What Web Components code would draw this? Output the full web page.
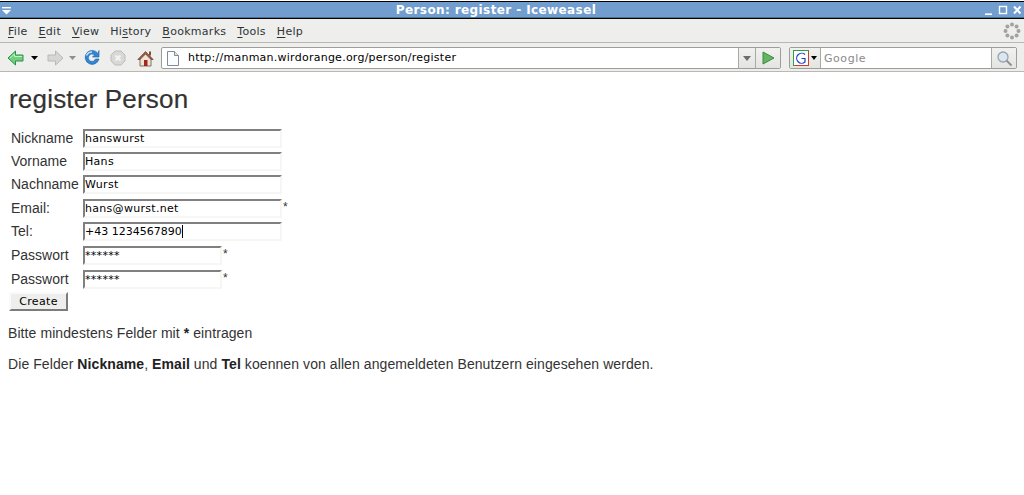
<!DOCTYPE html>
<html>
<head>
<meta charset="utf-8">
<title>Person: register - Iceweasel</title>
<style>
  html, body { margin: 0; padding: 0; background: #fff; }
  body { height: 495px; overflow: hidden; }
</style>
</head>
<body>
<browser-window>
  <title-bar label="Person: register - Iceweasel"></title-bar>
  <menu-bar></menu-bar>
  <nav-toolbar url="http://manman.wirdorange.org/person/register"></nav-toolbar>
  <register-page></register-page>
</browser-window>

<script>
const tplWindow = document.createElement('template');
tplWindow.innerHTML = `
  <style>
    :host {
      display: flex;
      flex-direction: column;
      width: 1024px;
      height: 495px;
      background: #fff;
      overflow: hidden;
    }
    .top { height: 1px; background: #fff; }
    .top2 { height: 1px; background: #000; }
  </style>
  <div class="top"></div>
  <div class="top2"></div>
  <slot></slot>
`;
class BrowserWindow extends HTMLElement {
  constructor() {
    super();
    this.attachShadow({mode:'open'}).appendChild(tplWindow.content.cloneNode(true));
  }
}
customElements.define('browser-window', BrowserWindow);

class TitleBar extends HTMLElement {
  constructor() {
    super();
    this.attachShadow({mode:'open'}).innerHTML = `
      <style>
        :host {
          display: flex;
          align-items: center;
          justify-content: space-between;
          height: 16px;
          background: #719ecf;
          border-bottom: 1px solid #000;
          box-shadow: inset 0 -1px 0 #4e7196;
          color: #fff;
          font: bold 12px "DejaVu Sans", sans-serif;
          padding: 0 2px;
        }
        .label { flex: 1; text-align: center; letter-spacing: 0.4px; margin-left: 2px; }
        svg { display: block; }
      </style>
      <svg width="10" height="9" viewBox="0 0 10 9"><rect x="0" y="1" width="9" height="1.4" fill="#fff"/><path d="M0 4h9L4.5 8.5z" fill="#fff"/></svg>
      <div class="label">${this.getAttribute('label')}</div>
      <svg width="44" height="12" viewBox="0 0 44 12" fill="none" stroke="#fff">
        <path d="M7 10.200h7" stroke-width="1.600"/>
        <rect x="21.500" y="2.500" width="7" height="7" stroke-width="1.400"/>
        <path d="M36 2.500l6.500 7M42.500 2.500l-6.500 7" stroke-width="2"/>
      </svg>
    `;
  }
}
customElements.define('title-bar', TitleBar);

class MenuBar extends HTMLElement {
  constructor() {
    super();
    const items = [['F','ile'],['E','dit'],['V','iew'],['Hi','s','tory'],['B','ookmarks'],['T','ools'],['H','elp']];
    const html = items.map(i => {
      if (i.length === 3) return `<span>${i[0]}<u>${i[1]}</u>${i[2]}</span>`;
      return `<span><u>${i[0]}</u>${i[1]}</span>`;
    }).join('');
    this.attachShadow({mode:'open'}).innerHTML = `
      <style>
        :host {
          display: flex;
          align-items: center;
          height: 23px;
          padding: 0 0 0 8px;
          background: #eeeeec;
          border-bottom: 1px solid #b9b8b2;
          color: #2e3436;
          font: 11px "DejaVu Sans", sans-serif;
          letter-spacing: 0.28px;
        }
        .items { display: flex; gap: 11px; flex: 1; padding-top: 2px; }
        u { text-underline-offset: 1.5px; }
        svg { display: block; margin-right: 3px; }
      </style>
      <div class="items">${html}</div>
      <svg width="18" height="18" viewBox="0 0 18 18" fill="#a2a2a0">
        <circle cx="9" cy="2.5" r="2"/><circle cx="13.6" cy="4.4" r="2"/><circle cx="15.5" cy="9" r="2"/>
        <circle cx="13.6" cy="13.6" r="2"/><circle cx="9" cy="15.5" r="2"/><circle cx="4.4" cy="13.6" r="2"/>
        <circle cx="2.5" cy="9" r="2"/><circle cx="4.4" cy="4.4" r="2"/>
      </svg>
    `;
  }
}
customElements.define('menu-bar', MenuBar);

class NavToolbar extends HTMLElement {
  constructor() {
    super();
    this.attachShadow({mode:'open'}).innerHTML = `
      <style>
        :host {
          display: flex;
          align-items: center;
          height: 26px;
          padding: 2px 4px 0 7px;
          background: #eeeeec;
          border-bottom: 1px solid #b9b8b2;
          font: 11px "DejaVu Sans", sans-serif;
        }
        svg { display: block; flex: none; }
        .urlbar, .search {
          display: flex;
          align-items: stretch;
          height: 20px;
          border: 1px solid #9d9d9b;
          background: #fff;
          border-radius: 2px;
        }
        .urlbar { width: 618px; margin-left: 7px; }
        .fav { width: 22px; display: flex; align-items: center; justify-content: center; }
        .addr { flex: 1; line-height: 20px; color: #000; padding-left: 4px; letter-spacing: 0.25px; white-space: nowrap; }
        .cell {
          display: flex; align-items: center; justify-content: center;
          background: linear-gradient(#f1f1ef, #e4e4e1);
          border-left: 1px solid #a8a8a6;
        }
        .drop { width: 16px; }
        .go { width: 24px; }
        .search { width: 226px; margin-left: 8px; }
        .engine {
          width: 27px; display: flex; align-items: center; gap: 2px; padding-left: 3px;
          background: linear-gradient(#f1f1ef, #e4e4e1);
          border-right: 1px solid #a8a8a6;
        }
        .q { flex: 1; line-height: 21px; color: #8a8a8a; padding-left: 3px; letter-spacing: 0.55px; }
        .mag { width: 24px; }
      </style>
      <svg width="18" height="16" viewBox="0 0 18 16">
        <path d="M1 8L8.500 1v4H16v6H8.500v4z" fill="#6fd07f" stroke="#2f8f4a" stroke-linejoin="round"/>
        <path d="M3 8l4.500-4v2.500H15" fill="none" stroke="#c4f0c8"/>
      </svg>
      <svg style="margin-left:6px" width="7" height="4" viewBox="0 0 7 4"><path d="M0 0h7L3.500 4z" fill="#000"/></svg>
      <svg style="margin-left:8px" width="18" height="16" viewBox="0 0 18 16">
        <path d="M17 8L9.500 1v4H2v6h7.500v4z" fill="#d6d6d4" stroke="#b8b8b6" stroke-linejoin="round"/>
      </svg>
      <svg style="margin-left:5px" width="7" height="4" viewBox="0 0 7 4"><path d="M0 0h7L3.500 4z" fill="#8f8f8d"/></svg>
      <svg style="margin-left:7px" width="18" height="18" viewBox="0 0 18 18">
        <path d="M15 4.500A7 7 0 1 0 16 10h-3.500A3.700 3.700 0 1 1 11.500 6L9.500 8H16V1.500z" fill="#2f86d8" stroke="#1b5fa8" stroke-width=".6"/>
        <path d="M3.500 6.500A6 6 0 0 1 9 3" fill="none" stroke="#bfe0fa" stroke-width="1.500"/>
      </svg>
      <svg style="margin-left:9px" width="16" height="16" viewBox="0 0 16 16">
        <path d="M5 1h6l4 4v6l-4 4H5l-4-4V5z" fill="#d8d8d6" stroke="#bdbdbb"/>
        <path d="M5.500 5.500l5 5M10.500 5.500l-5 5" stroke="#f4f4f2" stroke-width="2"/>
      </svg>
      <svg style="margin-left:11px" width="17" height="17" viewBox="0 0 17 17">
        <path d="M3 8v8h11V8L8.500 3z" fill="#efe3d2" stroke="#7f7264"/>
        <path d="M.8 9.500L8.500 1.500 16.200 9.500 14 9.500 8.500 4 3 9.500z" fill="#94614a" stroke="#6e3f2c" stroke-width=".7" stroke-linejoin="round"/>
        <rect x="12" y="1.500" width="2" height="4" fill="#8a4a32"/>
        <rect x="7" y="10" width="3.500" height="6" fill="#a4261c"/>
      </svg>
      <div class="urlbar">
        <div class="fav">
          <svg width="12" height="15" viewBox="0 0 12 15">
            <path d="M.5.500h7l4 4v10H.5z" fill="#fbfcfe" stroke="#7f8b99"/>
            <path d="M7.500.500v4h4" fill="#dfe5ec" stroke="#7f8b99"/>
          </svg>
        </div>
        <div class="addr">${this.getAttribute('url')}</div>
        <div class="cell drop"><svg width="8" height="5" viewBox="0 0 8 5"><path d="M0 0h8L4 5z" fill="#6d6d6b"/></svg></div>
        <div class="cell go"><svg width="13" height="14" viewBox="0 0 13 14"><path d="M1 1l11 6-11 6z" fill="#63b55e" stroke="#3d8a45"/></svg></div>
      </div>
      <div class="search">
        <div class="engine">
          <svg width="16" height="16" viewBox="0 0 16 16">
            <rect x=".5" y=".5" width="15" height="15" fill="#fff" stroke="#2f9e44"/>
            <path d="M15.500 1v14.500H2" stroke="#d23a2e" fill="none"/>
            <path d="M12 4.500A5 5 0 1 0 12 12V8.500H8.500" fill="none" stroke="#1a3fc0" stroke-width="1.200"/>
          </svg>
          <svg width="6" height="4" viewBox="0 0 6 4"><path d="M0 0h6L3 4z" fill="#000"/></svg>
        </div>
        <div class="q">Google</div>
        <div class="cell mag">
          <svg width="17" height="17" viewBox="0 0 17 17">
            <circle cx="7" cy="7" r="5" fill="#dbe6f2" stroke="#9aa3ad" stroke-width="1.300"/>
            <path d="M10.500 10.500l5 5" stroke="#8e9297" stroke-width="2"/>
          </svg>
        </div>
      </div>
    `;
  }
}
customElements.define('nav-toolbar', NavToolbar);

class FormField extends HTMLElement {
  constructor() {
    super();
    const size = this.getAttribute('size') || 'long';
    const star = this.hasAttribute('required') ? '<span class="star">*</span>' : '';
    const caret = this.hasAttribute('caret') ? '<i></i>' : '';
    this.attachShadow({mode:'open'}).innerHTML = `
      <style>
        :host {
          display: grid;
          grid-template-columns: 74px auto 1fr;
          align-items: start;
          height: 23px;
          font: 14px "Liberation Sans", Arial, sans-serif;
          color: #333;
        }
        .lab { line-height: 19px; padding-left: 2px; }
        .box {
          box-sizing: border-box;
          width: ${size === 'short' ? 139 : 199}px;
          height: 19px;
          background: #fff;
          border: 2px solid #f6f6f5;
          border-top-color: #808080;
          border-left-color: #808080;
          font: 11px "DejaVu Sans", sans-serif;
          color: #000;
          line-height: 16px;
          white-space: nowrap;
          letter-spacing: ${this.hasAttribute('caret') ? 0 : 0.3}px;
        }
        i { display: inline-block; width: 1px; height: 13px; background: #000; vertical-align: -3px; }
        .star { font-size: 12px; line-height: 14px; padding: 1px 0 0 1px; color: #333; }
      </style>
      <div class="lab">${this.getAttribute('label')}</div>
      <div class="box">${this.getAttribute('value')}${caret}</div>
      ${star}
    `;
  }
}
customElements.define('form-field', FormField);

class PushButton extends HTMLElement {
  constructor() {
    super();
    this.attachShadow({mode:'open'}).innerHTML = `
      <style>
        :host {
          display: block;
          box-sizing: border-box;
          width: 59px;
          height: 19px;
          background: #eeeeec;
          border: 2px solid;
          border-color: #fafafa #7c7c7c #7c7c7c #fafafa;
          font: 11px "DejaVu Sans", sans-serif;
          letter-spacing: 0.35px;
          color: #000;
          text-align: center;
          line-height: 15px;
        }
      </style>
      <slot></slot>
    `;
  }
}
customElements.define('push-button', PushButton);

const tplPage = document.createElement('template');
tplPage.innerHTML = `
  <style>
    :host {
      display: block;
      padding: 11px 8px 0 8px;
      font: 14px "Liberation Sans", Arial, sans-serif;
      color: #333;
    }
    h1 { font-size: 26px; font-weight: normal; line-height: 32px; margin: 0 0 14px 1px; color: #333; letter-spacing: 0.2px; -webkit-text-stroke: 0.2px #333; }
    .rows { display: flex; flex-direction: column; padding-left: 1px; }
    form-field.tall { height: 24px; }
    form-field.last { height: 22px; }
    .btn { margin-left: 1px; }
    p { margin: 14px 0 0 0; line-height: 17px; letter-spacing: 0.08px; }
    b { color: #222; }
  </style>
  <h1>register Person</h1>
  <div class="rows">
    <form-field label="Nickname" value="hanswurst"></form-field>
    <form-field label="Vorname" value="Hans"></form-field>
    <form-field class="tall" label="Nachname" value="Wurst"></form-field>
    <form-field label="Email:" value="hans@wurst.net" required></form-field>
    <form-field class="tall" label="Tel:" value="+43 1234567890" caret></form-field>
    <form-field class="tall" label="Passwort" value="******" size="short" required></form-field>
    <form-field class="last" label="Passwort" value="******" size="short" required></form-field>
  </div>
  <div class="btn"><push-button>Create</push-button></div>
  <p>Bitte mindestens Felder mit <b>*</b> eintragen</p>
  <p>Die Felder <b>Nickname</b>, <b>Email</b> und <b>Tel</b> koennen von allen angemeldeten Benutzern eingesehen werden.</p>
`;
class RegisterPage extends HTMLElement {
  constructor() {
    super();
    this.attachShadow({mode:'open'}).appendChild(tplPage.content.cloneNode(true));
  }
}
customElements.define('register-page', RegisterPage);
</script>
</body>
</html>
